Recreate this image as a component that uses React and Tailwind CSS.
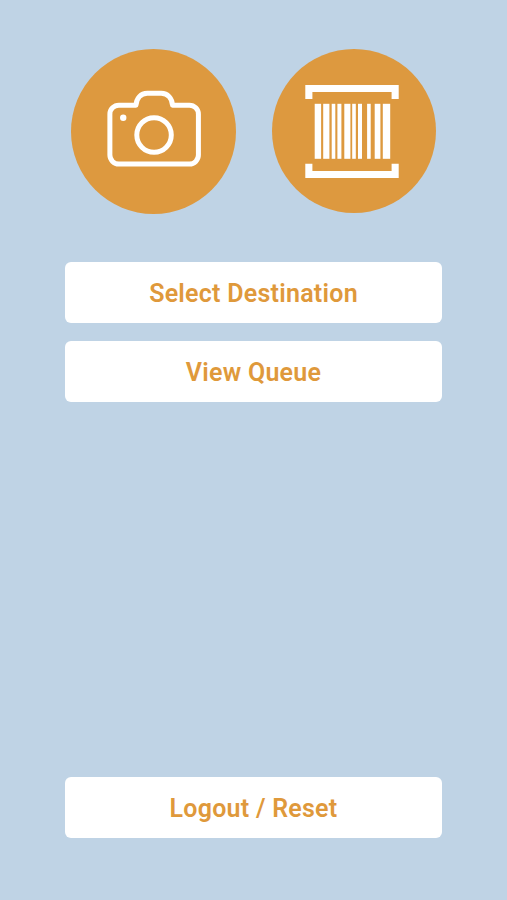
const BARS = [
  [42.7, 6.4],
  [51.2, 6.2],
  [59.7, 3.6],
  [65.4, 4],
  [72.3, 6.1],
  [80.2, 3.6],
  [86, 4],
  [95.1, 3.6],
  [102.7, 5.7],
  [110.8, 7.4],
];

const CameraIcon = () => (
  <svg viewBox="0 0 165 165" fill="none" stroke="#fff" strokeWidth="5" strokeLinejoin="round" className="w-full h-full">
    <path d="M48 56.4H65.2C65.6 49.3 70 44.4 76.5 44.4H90.5C97 44.4 101.4 49.3 101.8 56.4H118.8A9 9 0 0 1 127.8 65.4V106.4A9 9 0 0 1 118.8 115.4H48A9 9 0 0 1 39 106.4V65.4A9 9 0 0 1 48 56.4Z" />
    <circle cx="83.3" cy="86.3" r="17.3" />
    <circle cx="52.4" cy="69" r="3.2" fill="#fff" stroke="none" />
  </svg>
);

const BarcodeIcon = () => (
  <svg viewBox="0 0 164 164" fill="#fff" className="w-full h-full">
    <path d="M33.3 36H126.7V50H119.6V43H40.4V50H33.3Z" />
    <path d="M33.3 129V114.8H40.4V122H119.6V114.8H126.7V129Z" />
    {BARS.map(([x, width]) => (
      <rect key={x} x={x} y="54.8" width={width} height="55" />
    ))}
  </svg>
);

const MenuButton = ({ children }) => (
  <button className="w-full h-[61px] pt-0.5 rounded-md bg-white text-[#df993b] text-[25px] font-semibold leading-none tracking-[0.25px]">
    {children}
  </button>
);

const App = () => {
  return (
    <div className="h-screen bg-[#bfd3e5] font-['Roboto',sans-serif] flex flex-col pt-[49px] pb-[62.5px] px-[65px]">
      <div className="flex justify-between px-1.5">
        <button aria-label="Camera" className="w-[164.5px] h-[164.5px] rounded-full bg-[#dd993f]">
          <CameraIcon />
        </button>
        <button aria-label="Barcode" className="w-[164px] h-[164px] rounded-full bg-[#dd993f]">
          <BarcodeIcon />
        </button>
      </div>

      <div className="mt-12 flex flex-col gap-[18px]">
        <MenuButton>Select Destination</MenuButton>
        <MenuButton>View Queue</MenuButton>
      </div>

      <div className="mt-auto">
        <MenuButton>Logout / Reset</MenuButton>
      </div>
    </div>
  );
};

export default App;
